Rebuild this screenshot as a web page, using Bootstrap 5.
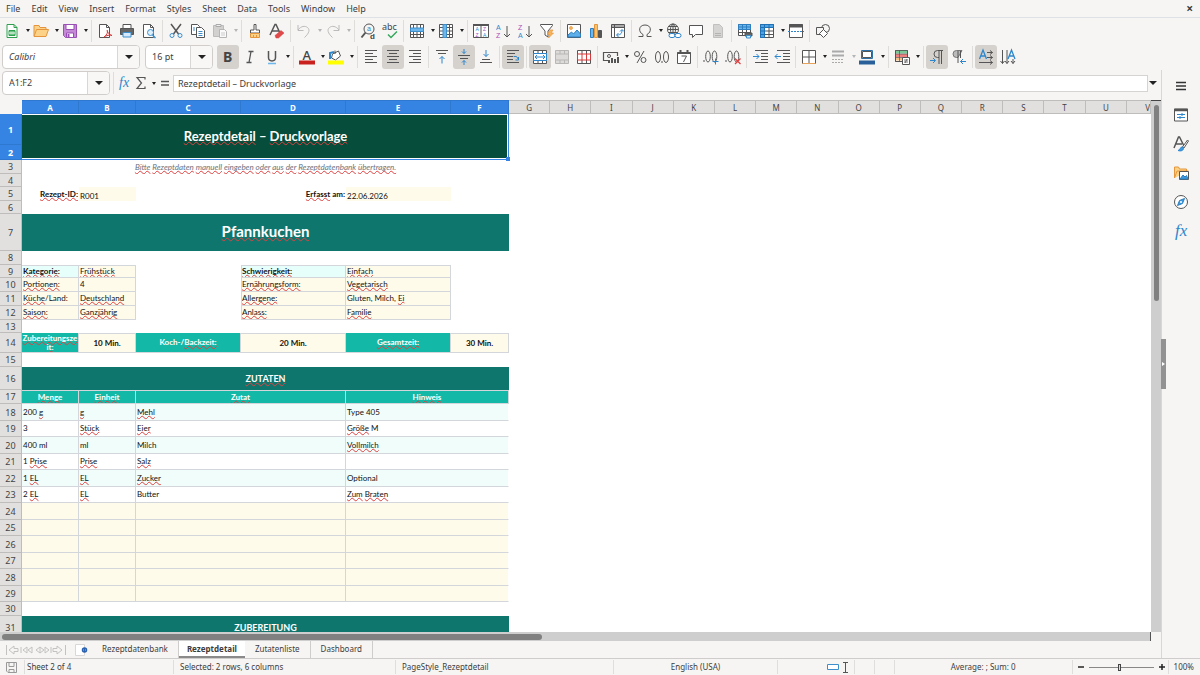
<!DOCTYPE html>
<html lang="de">
<head>
<meta charset="utf-8">
<meta name="viewport" content="width=device-width, initial-scale=1">
<title>Rezeptdetail</title>
<link href="https://cdn.jsdelivr.net/npm/bootstrap@5.3.0/dist/css/bootstrap.min.css" rel="stylesheet">
<style>
:root{--ui:#f6f5f4;--line:#d9d7d5;--ink:#3d3d3d;--blue:#3584e4}
body{font-family:"Noto Sans",sans-serif;font-size:9px;line-height:12px;color:var(--ink);background:var(--ui)}
button,input{font:inherit;color:inherit}
.shrinkable{min-width:0;min-height:0}
.menubar{height:17px;padding-left:6px;padding-right:7px;gap:11px}
.menubar a{color:inherit;text-decoration:none}
.menubar button{font-size:12px;font-weight:700}
.flat{border:0;background:none;padding:0}
.toolbar{height:27px;padding-left:2px}
.toolbar.first{height:26px;padding-left:1px}
.tool{width:22px;height:24px;border:0;border-radius:3px;background:none;padding:0;display:flex;align-items:center;justify-content:center;flex:none}
.tool.on{background:#d5d1cd}
.tool svg,.side svg{width:16px;height:16px}
.drop{width:7px;height:24px;border:0;background:none;padding:0;flex:none;display:flex;align-items:center;justify-content:center}
.drop::before,.combo button::before{content:"";border:3px solid transparent;border-top-color:#222;border-bottom:0}
.drop::before{border-left-width:2px;border-right-width:2px;margin-left:2px}
.drop.wide::before{border-width:4px 4px 0;margin-left:0}
.drop:disabled::before{border-top-color:#b5b5b5}
.rule{width:1px;height:22px;background:#dfddda;margin:0 2px;flex:none}
.drop + .rule{margin-left:3px}
svg{fill:none;stroke:#555;stroke-width:1;flex:none;overflow:visible}
svg text{stroke:none;fill:#444}
svg .az{font-family:"Liberation Sans",sans-serif;fill:#2d86cc}
svg .za{font-family:"Liberation Sans",sans-serif;fill:#a44db8}
.combo{height:24px;border:1px solid #d0cdca;border-radius:4px;background:#fff;overflow:hidden;flex:none}
.combo input{border:0;background:none;min-width:0;padding:0 6px;outline:0}
.combo button{width:22px;border:0;border-left:1px solid #d9d7d5;background:#f8f7f6;padding:0;display:flex;align-items:center;justify-content:center;flex:none}
.combo button::before{border-width:4px 4px 0}
.fontname{width:138px;margin-right:5px}
.fontsize{width:68px;margin-right:4px}
.namebox{width:108px}
.formulabar{height:30px;padding:0 5px 4px 2px;gap:1px}
.formula{height:17px;border:1px solid #d6d4d2;background:#fff;padding:0 4px;min-width:0;outline:0}
.tool.slim{width:15px}
.side{width:39px;border-left:1px solid var(--line);gap:13px;padding-top:8px}
.side .tool{height:16px}
.grip{left:-1px;top:269px;width:5px;height:50px;background:#929292}
.grip::before{content:"";position:absolute;left:1px;top:23px;border:2px solid transparent;border-left:3px solid #fff;border-right:0}
.vbar{width:10px;background:#cecece;padding:4px 2px 0 3px;border-top:1px solid #444}
.vbar div{height:196px;border-radius:3px;background:#808080}
.hbar{height:9px;margin-right:10px;background:#cecece;padding:2px 0 2px 2px;border-right:1px solid #555}
.hbar div{width:47%;height:6px;border-radius:3px;background:#808080}
.sheet{background:#fff}
.grid{table-layout:fixed;width:100%;border-collapse:separate;border-spacing:0;font-family:Lato,Carlito,sans-serif;font-size:8px;line-height:9px;color:#111}
.col-head{width:22px}.col-s{width:57px}.col-m{width:105px}.col-f{width:58px}.col-v{width:24px}
.grid th,.grid td{padding:0 1px;overflow:hidden;vertical-align:middle;white-space:nowrap}
.grid th{font-family:"Noto Sans",sans-serif;font-weight:400;text-align:center;color:#444;background:#e1e0df;border-right:1px solid #bebdbc;border-bottom:1px solid #bebdbc;padding:0;font-size:9px}
.grid thead th{font-size:8px;border-top:1px solid #bebdbc}
.grid th.sel{background:var(--blue);color:#fff;font-weight:700;border-color:#2f78d0}
.grid thead th:first-child{background:var(--ui);border-color:var(--ui)}
.h13{height:13px}.h14{height:14px}.h15{height:15px}.h16{height:16px}.h17{height:17px}.h20{height:20px}.h23{height:23px}.h31{height:31px}.h37{height:37px}
.grid .c{text-align:center}.grid .r{text-align:right}
.grid .hero{background:#064e3b;color:#fff;font-weight:700;font-size:13px;line-height:16px;padding-bottom:3px;position:relative;overflow:visible;box-shadow:inset -1px -1px #3584e4,inset -2px -2px #fff,inset 0 1px #fff}
.fillknob{position:absolute;right:-1px;bottom:-1px;width:4px;height:4px;background:var(--blue)}
.grid .dish{background:#0f766e;color:#fff;font-weight:700;font-size:15px;line-height:18px;padding-bottom:3px}
.grid .sect{background:#0f766e;color:#fff;font-weight:700;font-size:9px}
.grid .hint{color:#6b7280;font-style:italic}
.grid .in{background:#fffbeb}
.grid .bx{border-right:1px solid #d3d7dc;border-bottom:1px solid #d3d7dc}
.grid .tp{border-top:1px solid #d3d7dc}
.grid .lf{border-left:1px solid #d3d7dc;padding-left:0}
.grid .key{background:#e6fffa;font-weight:700}
.grid .teal{background:#14b8a6;color:#fff;font-weight:700}
.grid .two{white-space:normal;word-break:break-all;line-height:9px;padding:0}
.grid .low{vertical-align:bottom}
.grid .mint td:not(:last-child){background:#f0fdfa}
.grid .line td:not(:last-child){border-right:1px solid #d3d7dc;border-bottom:1px solid #d3d7dc}
.grid .line td:nth-last-child(2){border-right-color:transparent;background-clip:padding-box}
.grid .empty td:not(:last-child){background-color:#fffbeb}
.sp{text-decoration:underline wavy #e04040 1px;text-underline-offset:0;text-decoration-skip-ink:none}
.tabs{height:17px;font-size:8px;padding-left:6px}
.tabs .nav-link{color:inherit;padding:0 10px;height:17px;line-height:16px;border-right:1px solid #cfcdcb}
.tabs .nav-link.active{background:#fff;font-weight:700;padding:0 8px;border:0;border-bottom:2px solid #8a8a8a}
.status{height:17px;font-size:8px;border-top:1px solid #cfcdcb}
.status > *{border-right:1px solid #e0dedc;height:14px;display:flex;align-items:center;padding:0 6px;white-space:nowrap;flex:none}
.w-save{width:25px}.w-sheet{width:149px}.w-sel{width:222px}.w-page{width:218px}.w-lang{width:164px}.w-mode{width:76px}.w-cell{width:20px}.w-sum{width:178px}.w-zoom{width:96px}
.status > .w-sheet{padding-left:2px}
.status > .w-zoom{padding:0 4px}
.status > .w-pct{padding-left:5px}
.zoomer{width:65px;height:10px;appearance:none;background:linear-gradient(#888,#888) center/100% 1px no-repeat;margin:0 4px}
.zoomer::-webkit-slider-thumb{appearance:none;width:3px;height:7px;border:1px solid #444;background:#ddd}
</style>
</head>
<body class="vh-100 d-flex flex-column overflow-hidden">
<nav class="menubar d-flex align-items-center flex-shrink-0">
<a href="#">File</a><a href="#">Edit</a><a href="#">View</a><a href="#">Insert</a><a href="#">Format</a><a href="#">Styles</a><a href="#">Sheet</a><a href="#">Data</a><a href="#">Tools</a><a href="#">Window</a><a href="#">Help</a>
<button class="flat ms-auto" aria-label="Close">×</button>
</nav>

<div class="toolbar first d-flex align-items-center flex-shrink-0 border-top" role="toolbar" aria-label="Standard">
<button class="tool" aria-label="New"><svg viewBox="0 0 16 16"><path d="M3 1.500h7l3 3v10H3z" fill="#fff" stroke="#2e9e4f"/><path d="M10 1.500v3h3" stroke="#2e9e4f"/><path d="M5 7.500h6v5H5z" fill="#6fc384" stroke="#2e9e4f"/><path d="M5 10h6" stroke="#fff"/></svg></button><button class="drop" aria-label="New options"></button>
<button class="tool" aria-label="Open"><svg viewBox="0 0 16 16"><path d="M1 13V2.500h5l1 2h6V7" fill="#fbd287" stroke="#e5963c"/><path d="M1 13.500 3.500 6.500h12L13 13.500z" fill="#fbd287" stroke="#e5963c"/></svg></button><button class="drop" aria-label="Open options"></button>
<button class="tool" aria-label="Save"><svg viewBox="0 0 16 16"><path d="M1.500 1.500h13v13h-11l-2-2z" fill="#c48ad6" stroke="#9a4fb5"/><path d="M4 1.500h8v5H4zM4.500 10h7v4.500h-7z" fill="#fff" stroke="#9a4fb5"/><path d="M6.500 11v3" stroke="#9a4fb5" stroke-width="2"/></svg></button><button class="drop" aria-label="Save options"></button>
<span class="rule"></span>
<button class="tool" aria-label="Export PDF"><svg viewBox="0 0 16 16"><path d="M2.500 1.500h7l3 3v10h-10z" fill="#fff"/><path d="M9.500 1.500v3h3"/><path d="M7 14c3-2 4-5 3.500-6.500S9 10 15 12.500c-2-1-6 0-8 1.500" stroke="#d9383a"/></svg></button>
<button class="tool" aria-label="Print"><svg viewBox="0 0 16 16"><path d="M4 5V1.500h8V5" fill="#fff"/><path d="M1.500 5.500h13v6h-13z" fill="#666"/><path d="M4 9.500h8v4.500H4z" fill="#d4eafc" stroke="#3d8fcc"/></svg></button>
<button class="tool" aria-label="Preview"><svg viewBox="0 0 16 16"><path d="M2.500 1.500h7l3 3v10h-10z" fill="#fff"/><path d="M9.500 1.500v3h3"/><circle cx="9.500" cy="9.500" r="3" fill="#dff0fc" stroke="#3d8fcc"/><path d="m11.500 12 3 3" stroke="#3d8fcc" stroke-width="1.500"/></svg></button>
<span class="rule"></span>
<button class="tool" aria-label="Cut"><svg viewBox="0 0 16 16"><path d="m3 1 7.500 10M13 1 5.500 11" stroke-width="1.500"/><circle cx="4" cy="12.500" r="2" stroke="#3d8fcc"/><circle cx="12" cy="12.500" r="2" stroke="#3d8fcc"/></svg></button>
<button class="tool" aria-label="Copy"><svg viewBox="0 0 16 16"><path d="M1.500 1.500h6l2 2v8h-8z" fill="#fff"/><path d="M6.500 4.500h5l3 3v7h-8z" fill="#fff"/><path d="M8.500 8.500h4M8.500 10.500h4M8.500 12.500h4M3 5h2M3 7h2" stroke="#3d8fcc"/></svg></button>
<button class="tool" aria-label="Paste" disabled><svg viewBox="0 0 16 16"><path d="M1.500 2.500h10v11h-10z" fill="#d3d1cf" stroke="#bbb"/><path d="M4 1.500h5v2H4z" fill="#eee" stroke="#aaa"/><path d="M7.500 6.500h5l2 2v6h-7z" fill="#fafafa" stroke="#b5b5b5"/><path d="M9 10h4M9 12h4" stroke="#ccc"/></svg></button><button class="drop" aria-label="Paste options" disabled></button>
<span class="rule"></span>
<button class="tool" aria-label="Clone formatting"><svg viewBox="0 0 16 16"><path d="M7 1.500h2V7h3.500v3h-9V7H7z" fill="#fff"/><path d="M3.500 10.500h9v4h-9zM6.500 14v-2M9.500 14v-2" fill="#fbd287" stroke="#e5963c"/></svg></button>
<button class="tool" aria-label="Clear formatting"><svg viewBox="0 0 16 16"><path d="M1 12 6 1.500h1L11 10M3 8h6.500" stroke-width="1.500"/><path d="m6 12.500 6-5 3 2.500-5.500 5H7z" fill="#e04a4a" stroke="#d9383a" stroke-width=".5"/></svg></button>
<span class="rule"></span>
<button class="tool" aria-label="Undo" disabled><svg viewBox="0 0 16 16"><path d="M2 2v5.500h5.500M2 7C5 3 9 2.500 11.500 4.500s2 5.500-3 10" stroke="#bbb"/></svg></button><button class="drop" aria-label="Undo list" disabled></button>
<button class="tool" aria-label="Redo" disabled><svg viewBox="0 0 16 16"><path d="M14 2v5.500H8.500M14 7C11 3 7 2.500 4.500 4.500s-2 5.500 3 10" stroke="#bbb"/></svg></button><button class="drop" aria-label="Redo list" disabled></button>
<span class="rule"></span>
<button class="tool" aria-label="Find and replace"><svg viewBox="0 0 16 16"><circle cx="9" cy="6" r="5"/><path d="m5.500 9.500-4 5" stroke-width="2"/><text class="az" x="7" y="8" font-size="7">a</text><text x="10" y="15.500" font-size="8" font-weight="700" font-family="Liberation Sans,sans-serif">d</text></svg></button>
<button class="tool" aria-label="Spelling"><svg viewBox="0 0 16 16"><text x="0" y="7" font-size="9">abc</text><path d="m6 11.500 3 3 6-6" stroke="#36a95c" stroke-width="1.500"/></svg></button>
<span class="rule"></span>
<button class="tool" aria-label="Row"><svg viewBox="0 0 16 16"><path d="M1.500 1.500h13v13h-13zM4.500 1.500v13M8 1.500v13M11.500 1.500v13M1.500 11.500h13" fill="#fff"/><path d="M1.500 5h13v3.500h-13z" fill="#6db7ec" stroke="#3d8fcc"/></svg></button><button class="drop" aria-label="Row options"></button>
<button class="tool" aria-label="Column"><svg viewBox="0 0 16 16"><path d="M1.500 1.500h13v13h-13zM1.500 4.500h13M1.500 8h13M1.500 11.500h13M11.500 1.500v13" fill="#fff"/><path d="M5 1.500h3.500v13H5z" fill="#6db7ec" stroke="#3d8fcc"/></svg></button><button class="drop" aria-label="Column options"></button>
<span class="rule"></span>
<button class="tool" aria-label="Sort"><svg viewBox="0 0 16 16"><path d="M.5 1.500h15v13H.5zM8 2v12.500" fill="#fff"/><path d="M0 2h16" stroke-width="2"/><text class="az" x="2.500" y="8" font-size="5">A</text><text class="za" x="2.500" y="14" font-size="5">Z</text><text class="za" x="10" y="8" font-size="5">Z</text><text class="az" x="10" y="14" font-size="5">A</text></svg></button>
<button class="tool" aria-label="Sort ascending"><svg viewBox="0 0 16 16"><text class="az" x="1" y="7" font-size="7">A</text><text class="za" x="1" y="15" font-size="7">Z</text><path d="M12 3v11M9 11l3 3 3-3"/></svg></button>
<button class="tool" aria-label="Sort descending"><svg viewBox="0 0 16 16"><text class="za" x="1" y="7" font-size="7">Z</text><text class="az" x="1" y="15" font-size="7">A</text><path d="M12 3v11M9 11l3 3 3-3"/></svg></button>
<button class="tool" aria-label="AutoFilter"><svg viewBox="0 0 16 16"><path d="M1.500 1.500h12v1L9 8v6l-3-2V8L1.500 2.500z" fill="#fff"/><path d="m11 7-2.500 4.500h2.500L9.500 15l5-5H12l2-3z" fill="#fbb45c" stroke="#e5963c" stroke-width=".7"/></svg></button>
<span class="rule"></span>
<button class="tool" aria-label="Image"><svg viewBox="0 0 16 16"><path d="M1.500 1.500h13v13h-13z" fill="#fff"/><circle cx="5" cy="5" r="1.500" fill="#fbb45c" stroke="#e5963c" stroke-width=".7"/><path d="M2 14V12l3.500-3 2 2L11 7l3.500 4v3z" fill="#5fb0ea" stroke="#2d7fc0"/></svg></button>
<button class="tool" aria-label="Chart"><svg viewBox="0 0 16 16"><path d="M2.500 5.500h3v9h-3z" fill="#6db7ec" stroke="#2d7fc0"/><path d="M6.500 1.500h3v13h-3z" fill="#fbc36c" stroke="#e5963c"/><path d="M10.500 7.500h3v7h-3z" fill="#555"/></svg></button>
<button class="tool" aria-label="Pivot table"><svg viewBox="0 0 16 16"><path d="M1.500 1.500h13v13h-13zM4.500 1.500v13M1.500 4.500h13M2 3h12" fill="#fff"/><path d="M7 12c4 0 5-2 5-5M10 8.500l2-2 2 2M8.500 10l-2 2 2 2" stroke="#2d86cc"/></svg></button>
<span class="rule"></span>
<button class="tool" aria-label="Special character"><svg viewBox="0 0 16 16"><path d="M1.500 13.500H6v-2C1 9 1.500 2 8 2s7 7 2 9.500v2h4.500"/></svg></button><button class="drop" aria-label="Special character list"></button>
<button class="tool" aria-label="Hyperlink"><svg viewBox="0 0 16 16"><circle cx="7" cy="6.500" r="5.500"/><path d="M1.500 6.500h11M7 1v11M3 3.500h8M3 9.500h8"/><ellipse cx="7" cy="6.500" rx="2.500" ry="5.500"/><rect x="3" y="10.500" width="6" height="4" rx="2" fill="#fff" stroke="#2d86cc"/><rect x="9" y="10.500" width="6" height="4" rx="2" fill="#fff" stroke="#2d86cc"/></svg></button>
<button class="tool" aria-label="Comment"><svg viewBox="0 0 16 16"><path d="M1.500 2.500h13v9H7.500l-3 3v-3h-3z" fill="#fff"/></svg></button>
<button class="tool" aria-label="Headers and footers" disabled><svg viewBox="0 0 16 16"><path d="M3.500 1.500h6l3 3v10h-9z" fill="#d6d4d2" stroke="#c2c0be"/><path d="M5 10.500h6M5 12.500h6" stroke="#b5b3b1"/></svg></button>
<span class="rule"></span>
<button class="tool" aria-label="Print area"><svg viewBox="0 0 16 16"><path d="M1.500 1.500h12v11h-12zM1.500 9.500h12M5.500 2v10M9.500 2v10" fill="#fff"/><path d="M1.500 1.500h12v5h-12z" fill="#6db7ec" stroke="#2d7fc0"/><path d="M1.500 4h12M5.500 2v4M9.500 2v4" stroke="#2d7fc0"/><path d="M8 10h7v3H8z" fill="#666"/><path d="M9.500 12.500h4v2.500h-4z" fill="#d4eafc" stroke="#3d8fcc"/></svg></button>
<button class="tool" aria-label="Freeze"><svg viewBox="0 0 16 16"><path d="M1.500 1.500h13v13h-13zM5.500 8h9M5.500 11.500h9M10 5v9.500" fill="#fff"/><path d="M1.500 1.500h13v3h-9v10h-4z" fill="#4fa3e2" stroke="#1f70b5"/><path d="M1.500 8h4M1.500 11.500h4M10 1.500v3M1.500 4.500h4v-3" stroke="#1f70b5"/></svg></button><button class="drop" aria-label="Freeze options"></button>
<button class="tool" aria-label="Split window"><svg viewBox="0 0 16 16"><path d="M1.500 1.500h13v13h-13z" fill="#fff"/><path d="M1 3h14" stroke-width="3"/><path d="M0 8.500h16" stroke="#2d86cc" stroke-dasharray="2 1"/></svg></button>
<span class="rule"></span>
<button class="tool" aria-label="Draw functions"><svg viewBox="0 0 16 16"><circle cx="10.500" cy="5.500" r="4"/><path d="M1.500 4.500h7v7h-7z" fill="#f6f5f4"/><path d="m8.500 6.500 4 4-4 4-4-4z" fill="#fff"/></svg></button>
</div>

<div class="toolbar d-flex align-items-center flex-shrink-0" role="toolbar" aria-label="Formatting">
<div class="combo fontname d-flex"><input class="flex-grow-1 fst-italic" aria-label="Font name" value="Calibri"><button aria-label="Font list"></button></div>
<div class="combo fontsize d-flex"><input class="flex-grow-1" aria-label="Font size" value="16 pt"><button aria-label="Size list"></button></div>
<button class="tool on" aria-label="Bold"><svg viewBox="0 0 16 16"><text x="3" y="13" font-size="14" font-weight="700">B</text></svg></button>
<button class="tool" aria-label="Italic"><svg viewBox="0 0 16 16"><path d="M6.500 2.500h5M4.500 13.500h5M9 2.500l-2 11" stroke-width="1.300"/></svg></button>
<button class="tool" aria-label="Underline"><svg viewBox="0 0 16 16"><path d="M4.500 2v6.500c0 4.500 7 4.500 7 0V2" stroke-width="1.500"/><path d="M4 14.500h8" stroke="#6db7ec" stroke-width="1.500"/></svg></button><button class="drop" aria-label="Underline styles"></button>
<span class="rule"></span>
<button class="tool" aria-label="Font color"><svg viewBox="0 0 16 16"><text x="3.500" y="10.500" font-size="13" font-weight="500">A</text><path d="M0 13.500h16" stroke="#c9211e" stroke-width="4"/></svg></button><button class="drop" aria-label="Font colors"></button>
<button class="tool" aria-label="Background color"><svg viewBox="0 0 16 16"><path d="m4.500 5 6-3 2 5-5 4-4-2zM7 5V1.500" fill="#fff"/><path d="M2 10V4l4-1" stroke="#2d86cc" stroke-width="2"/><path d="M0 13.500h16" stroke="#ffff00" stroke-width="4"/></svg></button><button class="drop" aria-label="Background colors"></button>
<span class="rule"></span>
<button class="tool" aria-label="Align left"><svg viewBox="0 0 16 16"><path d="M2 1.500h12M2 4.500h8M2 7.500h12M2 10.500h8M2 13.500h12"/></svg></button>
<button class="tool on" aria-label="Center"><svg viewBox="0 0 16 16"><path d="M2 1.500h12M4 4.500h8M2 7.500h12M4 10.500h8M2 13.500h12"/></svg></button>
<button class="tool" aria-label="Align right"><svg viewBox="0 0 16 16"><path d="M2 1.500h12M6 4.500h8M2 7.500h12M6 10.500h8M2 13.500h12"/></svg></button>
<span class="rule"></span>
<button class="tool" aria-label="Align top"><svg viewBox="0 0 16 16"><path d="M2 1.500h12M4 4.500h8"/><path d="M8 14.500v-7M5.500 10 8 7.500l2.500 2.500" stroke="#2d86cc"/></svg></button>
<button class="tool on" aria-label="Center vertically"><svg viewBox="0 0 16 16"><path d="M2 6.500h12M4 9.500h8"/><path d="M8 0v4.500M6 2.500l2 2 2-2M8 16v-4.500M6 13.500l2-2 2 2" stroke="#2d86cc"/></svg></button>
<button class="tool" aria-label="Align bottom"><svg viewBox="0 0 16 16"><path d="M2 13.500h12M4 10.500h8"/><path d="M8 1v6.500M5.500 5 8 7.500 10.500 5" stroke="#2d86cc"/></svg></button>
<span class="rule"></span>
<button class="tool on" aria-label="Wrap text"><svg viewBox="0 0 16 16"><path d="M2 1.500h12M2 4.500h8M2 7.500h6M2 10.500h6M2 13.500h12"/><path d="M8.500 7.500h3l2 3M10.500 11h3V8" stroke="#2d86cc"/></svg></button>
<span class="rule"></span>
<button class="tool on" aria-label="Merge and center"><svg viewBox="0 0 16 16"><path d="M1.500 1.500h13v13h-13zM6 2v12M10.500 2v12" fill="#fff"/><path d="M1.500 4.500h13v7h-13z" fill="#fff" stroke="#2d86cc"/><path d="M3 8h10M5 6 3 8l2 2M11 6l2 2-2 2" stroke="#2d86cc"/></svg></button>
<button class="tool" aria-label="Merge cells" disabled><svg viewBox="0 0 16 16"><path d="M1.500 1.500h13v13h-13zM6 2v3M10.500 2v3M6 11v3M10.500 11v3M1.500 5h13v6h-13z" fill="#dddbd9" stroke="#b9b7b5"/></svg></button>
<button class="tool" aria-label="Split cells"><svg viewBox="0 0 16 16"><path d="M1.500 1.500h13v13h-13zM6 2v12M10.500 2v12" fill="#fff"/><path d="M1.500 5h13v6h-13zM6 5v6M10.500 5v6" fill="#fff" stroke="#d9383a"/></svg></button>
<span class="rule"></span>
<button class="tool" aria-label="Currency"><svg viewBox="0 0 16 16"><path d="M14.500 7V3.500h-14v8H5" stroke-width="1.200"/><circle cx="6" cy="7" r="1.500"/><path d="M6 14V11M9 14V9M12 14V10M15 14V8" stroke-width="2"/></svg></button><button class="drop" aria-label="Currency list"></button>
<button class="tool" aria-label="Percent"><svg viewBox="0 0 16 16"><circle cx="5" cy="5" r="2.500"/><circle cx="11.500" cy="11" r="2.500"/><path d="M12 2 5 14"/></svg></button>
<button class="tool" aria-label="Number"><svg viewBox="0 0 16 16"><ellipse cx="4" cy="8" rx="2.500" ry="5.500"/><ellipse cx="12" cy="8" rx="2.500" ry="5.500"/><path d="M8 12v2"/></svg></button>
<button class="tool" aria-label="Date"><svg viewBox="0 0 16 16"><path d="M1.500 3.500h13v11h-13z" fill="#fff"/><path d="M1.500 4h13M4.500 1v3M11.500 1v3" stroke-width="2"/><path d="M5.500 7h5l-3 6"/></svg></button>
<span class="rule"></span>
<button class="tool" aria-label="Add decimal"><svg viewBox="0 0 16 16"><path d="M1 11v2"/><ellipse cx="5" cy="7.500" rx="2.300" ry="5.500"/><ellipse cx="11.500" cy="7.500" rx="2.300" ry="5.500"/><path d="M12.500 9.500v6M9.500 12.500h6" stroke="#2d86cc"/></svg></button>
<button class="tool" aria-label="Delete decimal"><svg viewBox="0 0 16 16"><path d="M1 11v2"/><ellipse cx="5" cy="7.500" rx="2.300" ry="5.500"/><ellipse cx="11.500" cy="7.500" rx="2.300" ry="5.500"/><path d="m10 9.500 5.500 5.500m0-5.500L10 15" stroke="#e04040" stroke-width="1.300"/></svg></button>
<span class="rule"></span>
<button class="tool" aria-label="Increase indent"><svg viewBox="0 0 16 16"><path d="M3 1.500h13M9 4.500h7M9 7.500h7M9 10.500h7M3 13.500h13"/><path d="M1 7.500h6M4.500 5 7 7.500 4.500 10" stroke="#2d86cc"/></svg></button>
<button class="tool" aria-label="Decrease indent"><svg viewBox="0 0 16 16"><path d="M3 1.500h13M9 4.500h7M9 7.500h7M9 10.500h7M3 13.500h13"/><path d="M1 7.500h6M3.500 5 1 7.500 3.500 10" stroke="#2d86cc"/></svg></button>
<span class="rule"></span>
<button class="tool" aria-label="Borders"><svg viewBox="0 0 16 16"><path d="M1.500 1.500h13v13h-13zM8 1.500v13M1.500 8h13" fill="#fff"/><path d="M1.500 14.500h13" stroke="#e8a35b"/></svg></button><button class="drop" aria-label="Border list"></button>
<button class="tool" aria-label="Border style" disabled><svg viewBox="0 0 16 16"><path d="M2 2.500h12M2 6.500h12" stroke="#aaa" stroke-width="2"/><path d="M2 10.500h12M2 13.500h12" stroke="#aaa" stroke-dasharray="2 1"/></svg></button><button class="drop" aria-label="Border styles" disabled></button>
<button class="tool" aria-label="Border color"><svg viewBox="0 0 16 16"><path d="M2.500 1.500h11v8h-11z" fill="#fff" stroke="#2d70a8"/><path d="M3.500 2.500h9v6h-9z"/><path d="M0 13.500h16" stroke="#2a6099" stroke-width="4"/></svg></button><button class="drop" aria-label="Border colors"></button>
<span class="rule"></span>
<button class="tool" aria-label="Conditional formatting"><svg viewBox="0 0 16 16"><path d="M1.500 1.500h12v11h-12z" fill="#fff"/><path d="M2 3h11" stroke="#7cc796" stroke-width="3"/><path d="M2 6.500h11" stroke="#ee8080" stroke-width="3"/><path d="M2 10h6" stroke="#f5c08a" stroke-width="3"/><path d="M1.500 1.500h12v11h-12zM5.500 1.500v11M1.500 5h12M1.500 8.500h12" stroke-width=".7"/><path d="M8.500 8.500h7v7h-7z" fill="#fff"/><path d="M10 11h4M10 13h4M13 10l-2 4" stroke-width=".8"/></svg></button><button class="drop" aria-label="Conditional list"></button>
<span class="rule"></span>
<button class="tool on" aria-label="Left to right"><svg viewBox="0 0 16 16"><path d="M14 1.500H8.500a3.500 3.500 0 0 0 0 7H10M10 2v13M12.500 2v13"/><path d="M1 11.500h5M4 9l2.500 2.500L4 14" stroke="#2d86cc"/></svg></button>
<button class="tool" aria-label="Right to left"><svg viewBox="0 0 16 16"><path d="M11 1.500H5.500a3.500 3.500 0 0 0 0 7H7z" fill="#bbb" stroke="#777"/><path d="M7 2v12M9.500 2v7"/><path d="M9.500 12.500H15M12 10l-2.500 2.500L12 15" stroke="#2d86cc"/></svg></button>
<span class="rule"></span>
<button class="tool on" aria-label="Text direction horizontal"><svg viewBox="0 0 16 16"><path d="m1.500 10 3.500-9 3.500 9M3 7h4" stroke="#2d86cc" stroke-width="1.300"/><path d="M9 3.500h5.500M12 1.500l2.500 2-2.500 2M9 8.500h5.500M12 6.500l2.500 2-2.500 2M1 13.500h13.500M12 11.500l2.500 2-2.500 2"/></svg></button>
<button class="tool" aria-label="Text direction vertical"><svg viewBox="0 0 16 16"><path d="m8 10 3.500-9L15 10M9 7h5" stroke="#2d86cc" stroke-width="1.300"/><path d="M2.500 1v13.500M.5 12l2 2.500 2-2.500M7 1v13.500M5 12l2 2.500L9 12M13 10v4.500M11 12l2 2.500 2-2.500"/></svg></button>
</div>

<div class="d-flex flex-grow-1 shrinkable">
<main class="d-flex flex-column flex-grow-1 shrinkable">
<div class="formulabar d-flex align-items-center flex-shrink-0">
<div class="combo namebox d-flex"><input class="flex-grow-1" aria-label="Name box" value="A1:F2"><button aria-label="Named ranges"></button></div>
<span class="rule"></span>
<button class="tool slim" aria-label="Function wizard"><svg viewBox="0 0 16 16"><text x="2" y="12" font-size="14" font-family="Liberation Serif,serif" font-style="italic" style="fill:#2d86cc">fx</text></svg></button>
<button class="tool slim" aria-label="Select function"><svg viewBox="0 0 16 16"><path d="M12 4.500v-2H4L8.500 8 4 13.500h8v-2" stroke-width="1.200"/></svg></button><button class="drop" aria-label="Functions"></button>
<button class="tool slim" aria-label="Formula"><svg viewBox="0 0 16 16"><path d="M4 6.500h8M4 10h8" stroke-width="1.500"/></svg></button>
<input class="formula flex-grow-1" aria-label="Formula input" value="Rezeptdetail – Druckvorlage">
<button class="drop wide" aria-label="Expand formula bar"></button>
</div>
<div class="d-flex flex-grow-1 shrinkable">
<div class="sheet flex-grow-1 overflow-hidden shrinkable">
<table class="grid">
<colgroup><col class="col-head"><col class="col-s" span="2"><col class="col-m" span="3"><col class="col-f"><col span="15"><col class="col-v"></colgroup>
<thead><tr class="h14"><th></th><th class="sel">A</th><th class="sel">B</th><th class="sel">C</th><th class="sel">D</th><th class="sel">E</th><th class="sel">F</th><th>G</th><th>H</th><th>I</th><th>J</th><th>K</th><th>L</th><th>M</th><th>N</th><th>O</th><th>P</th><th>Q</th><th>R</th><th>S</th><th>T</th><th>U</th><th class="text-end">V</th></tr></thead>
<tbody>
<tr class="h31"><th class="sel">1</th><td class="hero c" colspan="6" rowspan="2"><span class="sp">Rezeptdetail</span> – <span class="sp">Druckvorlage</span><i class="fillknob"></i></td><td colspan="16"></td></tr>
<tr class="h15"><th class="sel">2</th><td colspan="16"></td></tr>
<tr class="h14"><th>3</th><td class="hint c" colspan="6"><span class="sp">Bitte</span> <span class="sp">Rezeptdaten</span> <span class="sp">manuell</span> <span class="sp">eingeben</span> <span class="sp">oder</span> <span class="sp">aus</span> <span class="sp">der</span> <span class="sp">Rezeptdatenbank</span> <span class="sp">übertragen.</span></td><td colspan="16"></td></tr>
<tr class="h13"><th>4</th><td colspan="22"></td></tr>
<tr class="h14"><th>5</th><td class="r"><b><span class="sp">Rezept-ID:</span></b></td><td class="in low">R001</td><td></td><td class="r"><b><span class="sp">Erfasst</span> am:</b></td><td class="in low">22.06.2026</td><td colspan="17"></td></tr>
<tr class="h13"><th>6</th><td colspan="22"></td></tr>
<tr class="h37"><th>7</th><td class="dish c" colspan="6"><span class="sp">Pfannkuchen</span></td><td colspan="16"></td></tr>
<tr class="h14"><th>8</th><td colspan="22"></td></tr>
<tr class="h13"><th>9</th><td class="key bx tp"><span class="sp">Kategorie:</span></td><td class="in bx tp"><span class="sp">Frühstück</span></td><td></td><td class="key bx tp lf"><span class="sp">Schwierigkeit:</span></td><td class="in bx tp"><span class="sp">Einfach</span></td><td colspan="17"></td></tr>
<tr class="h14"><th>10</th><td class="in bx"><span class="sp">Portionen:</span></td><td class="in bx">4</td><td></td><td class="in bx lf"><span class="sp">Ernährungsform:</span></td><td class="in bx"><span class="sp">Vegetarisch</span></td><td colspan="17"></td></tr>
<tr class="h14"><th>11</th><td class="in bx"><span class="sp">Küche</span>/Land:</td><td class="in bx"><span class="sp">Deutschland</span></td><td></td><td class="in bx lf"><span class="sp">Allergene:</span></td><td class="in bx">Gluten, Milch, <span class="sp">Ei</span></td><td colspan="17"></td></tr>
<tr class="h14"><th>12</th><td class="in bx"><span class="sp">Saison:</span></td><td class="in bx"><span class="sp">Ganzjährig</span></td><td></td><td class="in bx lf"><span class="sp">Anlass:</span></td><td class="in bx"><span class="sp">Familie</span></td><td colspan="17"></td></tr>
<tr class="h13"><th>13</th><td colspan="22"></td></tr>
<tr class="h20"><th>14</th><td class="teal bx c two"><span class="sp">Zubereitungszeit:</span></td><td class="in bx tp c fw-bold">10 Min.</td><td class="teal bx c">Koch-/<span class="sp">Backzeit:</span></td><td class="in bx tp c fw-bold">20 Min.</td><td class="teal bx c"><span class="sp">Gesamtzeit:</span></td><td class="in bx tp c fw-bold">30 Min.</td><td colspan="16"></td></tr>
<tr class="h14"><th>15</th><td colspan="22"></td></tr>
<tr class="h23"><th>16</th><td class="sect c" colspan="6"><span class="sp">ZUTATEN</span></td><td colspan="16"></td></tr>
<tr class="h14"><th>17</th><td class="teal bx tp c"><span class="sp">Menge</span></td><td class="teal bx tp c"><span class="sp">Einheit</span></td><td class="teal bx tp c" colspan="2"><span class="sp">Zutat</span></td><td class="teal bx tp c" colspan="2"><span class="sp">Hinweis</span></td><td colspan="16"></td></tr>
<tr class="h17 line mint"><th>18</th><td>200 <span class="sp">g</span></td><td><span class="sp">g</span></td><td colspan="2"><span class="sp">Mehl</span></td><td colspan="2">Type 405</td><td colspan="16"></td></tr>
<tr class="h16 line"><th>19</th><td>3</td><td><span class="sp">Stück</span></td><td colspan="2"><span class="sp">Eier</span></td><td colspan="2"><span class="sp">Größe</span> M</td><td colspan="16"></td></tr>
<tr class="h17 line mint"><th>20</th><td>400 ml</td><td>ml</td><td colspan="2">Milch</td><td colspan="2"><span class="sp">Vollmilch</span></td><td colspan="16"></td></tr>
<tr class="h16 line"><th>21</th><td>1 <span class="sp">Prise</span></td><td><span class="sp">Prise</span></td><td colspan="2"><span class="sp">Salz</span></td><td colspan="2"></td><td colspan="16"></td></tr>
<tr class="h17 line mint"><th>22</th><td>1 <span class="sp">EL</span></td><td><span class="sp">EL</span></td><td colspan="2"><span class="sp">Zucker</span></td><td colspan="2">Optional</td><td colspan="16"></td></tr>
<tr class="h16 line"><th>23</th><td>2 <span class="sp">EL</span></td><td><span class="sp">EL</span></td><td colspan="2">Butter</td><td colspan="2"><span class="sp">Zum</span> <span class="sp">Braten</span></td><td colspan="16"></td></tr>
<tr class="h17 line empty"><th>24</th><td></td><td></td><td colspan="2"></td><td colspan="2"></td><td colspan="16"></td></tr>
<tr class="h16 line empty"><th>25</th><td></td><td></td><td colspan="2"></td><td colspan="2"></td><td colspan="16"></td></tr>
<tr class="h17 line empty"><th>26</th><td></td><td></td><td colspan="2"></td><td colspan="2"></td><td colspan="16"></td></tr>
<tr class="h16 line empty"><th>27</th><td></td><td></td><td colspan="2"></td><td colspan="2"></td><td colspan="16"></td></tr>
<tr class="h17 line empty"><th>28</th><td></td><td></td><td colspan="2"></td><td colspan="2"></td><td colspan="16"></td></tr>
<tr class="h16 line empty"><th>29</th><td></td><td></td><td colspan="2"></td><td colspan="2"></td><td colspan="16"></td></tr>
<tr class="h14"><th>30</th><td colspan="22"></td></tr>
<tr class="h23"><th>31</th><td class="sect c" colspan="6"><span class="sp">ZUBEREITUNG</span></td><td colspan="16"></td></tr>
</tbody>
</table>
</div>
<div class="vbar flex-shrink-0"><div></div></div>
</div>
<div class="hbar flex-shrink-0"><div></div></div>
<div class="tabs d-flex align-items-center flex-shrink-0">
<button class="flat d-flex" aria-label="Scroll sheets"><svg width="60" height="12" viewBox="0 0 60 12" style="stroke:#c4c2c0"><path d="M.5 1v10M3 6l5-4v2.500h4v3H8V10zM15 3v6M17 6l4-3v6zM22 6l4-3v6zM34 3v6l-4-3zM39 3v6l4-3zM34 3l4 3-4 3M45 3v6M47 4.500h4V2l5 4-5 4V7.500h-4zM59.500 1v10"/></svg></button>
<button class="flat d-flex ms-2" aria-label="Add sheet"><svg width="14" height="14" viewBox="0 0 14 14"><path d="M1.500 1.500h9v11h-9z" fill="#fff" stroke="#dad8d6"/><circle cx="10.500" cy="7" r="2" fill="#fff" stroke="#2a62b0" stroke-width="1.500"/><path d="M10.500 5v4M8.500 7h4" stroke="#2a62b0"/></svg></button>
<nav class="nav flex-nowrap ms-1"><a class="nav-link" href="#">Rezeptdatenbank</a><a class="nav-link active" href="#">Rezeptdetail</a><a class="nav-link" href="#">Zutatenliste</a><a class="nav-link" href="#">Dashboard</a></nav>
</div>
</main>
<aside class="side d-flex flex-column align-items-center position-relative flex-shrink-0">
<div class="grip position-absolute"></div>
<button class="tool" aria-label="Sidebar settings"><svg viewBox="0 0 16 16"><path d="M3 4.500h10M3 8h10M3 11.500h10" stroke="#333" stroke-width="1.500"/></svg></button>
<button class="tool" aria-label="Properties"><svg viewBox="0 0 16 16"><path d="M1.500 2h13v12h-13z" fill="#fff"/><path d="M1 3h14" stroke-width="2.500"/><path d="M4 7.500h8M4 10.500h8M9 6v3M7 9v3" stroke="#2d86cc"/></svg></button>
<button class="tool" aria-label="Styles"><svg viewBox="0 0 16 16"><path d="m1 12 4.500-11h1L11 10M3 8h6" stroke-width="1.500"/><path d="m14.500 4-5 7 1.500 1 4.500-7z" fill="#fff"/><path d="M5 14.500c3 1 6 0 5.500-3L9 11c-2 0-1.500 3-4 3.500z" fill="#3d9ae0" stroke="#2d86cc"/></svg></button>
<button class="tool" aria-label="Gallery"><svg viewBox="0 0 16 16"><path d="M1.500 13V2h4l1 2h7v2M1.500 13 4 6h11.500" fill="#fbd287" stroke="#e5963c"/><path d="M6.500 6.500h9v8h-9z" fill="#fff"/><path d="m7 14 3-4 2 2 1.500-1.500L15 14z" fill="#3d9ae0" stroke="#2d7fc0"/></svg></button>
<button class="tool" aria-label="Navigator"><svg viewBox="0 0 16 16"><circle cx="8" cy="8" r="6.500" fill="#fff"/><path d="m11.500 4.500-2 5-5 2 2-5z" fill="#3d9ae0" stroke="#2d7fc0"/><circle cx="8" cy="8" r="1" fill="#fff" stroke="none"/></svg></button>
<button class="tool" aria-label="Functions"><svg viewBox="0 0 16 16"><text x="2" y="13" font-size="17" font-family="Liberation Serif,serif" font-style="italic" style="fill:#2d86cc">fx</text></svg></button>
</aside>
</div>

<footer class="status d-flex align-items-center flex-shrink-0">
<div class="w-save"><svg width="11" height="11" viewBox="0 0 11 11" style="stroke:#999"><path d="M.5.5h10v10H2L.5 9zM3 .5v4h5v-4M3 10.500v-3h5v3"/></svg></div>
<div class="w-sheet">Sheet 2 of 4</div>
<div class="w-sel">Selected: 2 rows, 6 columns</div>
<div class="w-page">PageStyle_Rezeptdetail</div>
<div class="w-lang justify-content-center">English (USA)</div>
<div class="border-0 flex-grow-1 p-0"></div>
<div class="w-mode justify-content-end gap-1"><svg width="12" height="8" viewBox="0 0 12 8"><path d="M.5 1.500h11v5H.5z" fill="#fff" stroke="#3d8fcc"/></svg><svg width="5" height="11" viewBox="0 0 5 11"><path d="M0 .5h5M0 10.500h5M2.500.5v10"/></svg></div>
<div class="w-cell"></div><div class="w-cell"></div>
<div class="w-sum justify-content-center">Average: ; Sum: 0</div>
<div class="w-zoom"><button class="flat d-flex" aria-label="Zoom out"><svg width="8" height="8" viewBox="0 0 8 8"><path d="M1 4h6" stroke="#222" stroke-width="1.500"/></svg></button><input class="zoomer" type="range" aria-label="Zoom" min="0" max="100" value="48"><button class="flat d-flex" aria-label="Zoom in"><svg width="8" height="8" viewBox="0 0 8 8"><path d="M1 4h6M4 1v6" stroke="#222" stroke-width="1.500"/></svg></button></div>
<div class="w-pct border-0">100%</div>
</footer>
<script src="https://cdn.jsdelivr.net/npm/bootstrap@5.3.0/dist/js/bootstrap.bundle.min.js"></script>
</body>
</html>
